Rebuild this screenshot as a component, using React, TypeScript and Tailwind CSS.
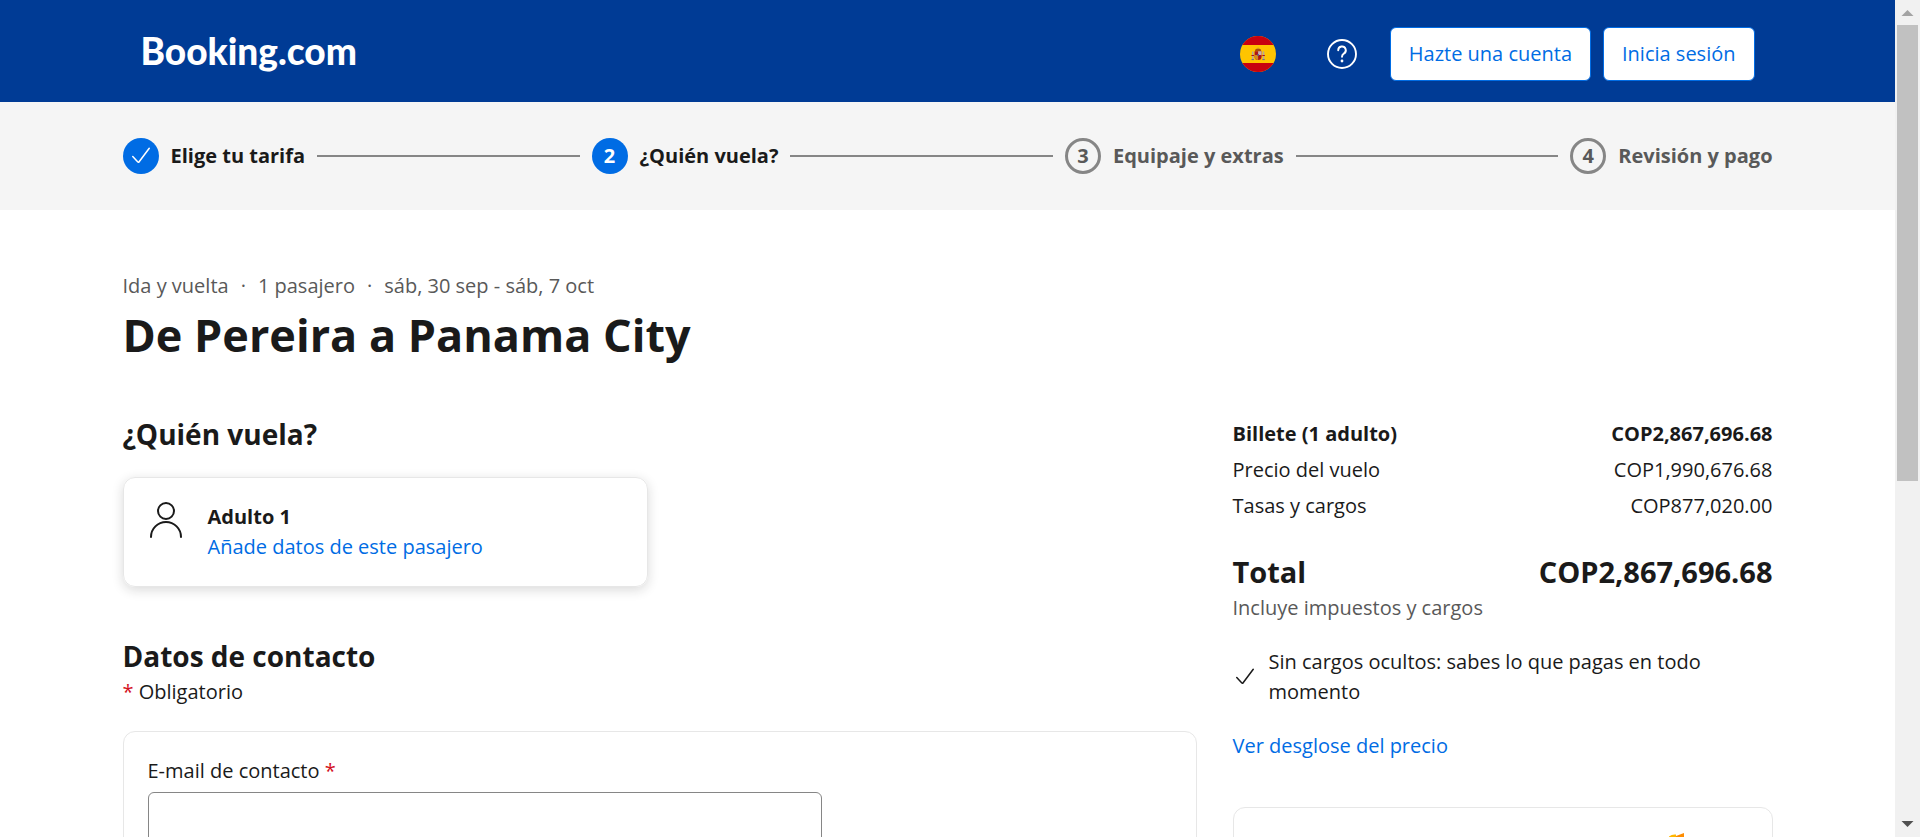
import { Fragment } from "react";

const steps = [
  { label: "Elige tu tarifa", state: "done" },
  { label: "¿Quién vuela?", state: "current" },
  { label: "Equipaje y extras", state: "pending" },
  { label: "Revisión y pago", state: "pending" },
];

const priceRows = [
  { label: "Billete (1 adulto)", value: "COP2,867,696.68", bold: true },
  { label: "Precio del vuelo", value: "COP1,990,676.68", bold: false },
  { label: "Tasas y cargos", value: "COP877,020.00", bold: false },
];

function CheckIcon({ className }: { className: string }) {
  return (
    <svg viewBox="0 0 24 24" className={className} fill="none" stroke="currentColor" strokeWidth="1.5" strokeLinecap="round" strokeLinejoin="round" aria-hidden="true">
      <path d="M3.750 12.500l5.100 5.600a.7.7 0 0 0 1.100-.1L20.250 4.250" />
    </svg>
  );
}

function SpainFlag() {
  return (
    <svg viewBox="0 0 36 36" className="size-9" aria-hidden="true">
      <defs>
        <clipPath id="round">
          <circle cx="18" cy="18" r="18" />
        </clipPath>
      </defs>
      <g clipPath="url(#round)">
        <rect width="36" height="36" fill="#ffc400" />
        <rect width="36" height="9" fill="#c8000f" />
        <rect y="27" width="36" height="9" fill="#c8000f" />
        <rect x="12" y="15.500" width="1.500" height="8" fill="#b5a79b" />
        <rect x="22.800" y="15.500" width="1.500" height="8" fill="#b5a79b" />
        <path d="M11.400 19.500h2.600M22.300 19.500h2.600" stroke="#ad1519" strokeWidth="1" />
        <path d="M11.500 23.600h2.500M22.300 23.600h2.500" stroke="#6a6a8f" strokeWidth="1" />
        <path d="M15 15.200c0-2 1.200-2.700 3.100-2.700s3.100.7 3.100 2.700z" fill="#a8500f" />
        <circle cx="18.100" cy="12.300" r=".8" fill="#c8a02a" />
        <path d="M14.600 15.200h7v5.400a3.500 3.500 0 0 1-7 0z" fill="#ad1519" />
        <path d="M18.100 15.200h3.500v3.800h-3.500z" fill="#c9b3b0" />
        <path d="M14.600 19h3.500v5a3.500 3.500 0 0 1-3.500-3.400z" fill="#d58a1c" />
        <circle cx="18.100" cy="19" r="1" fill="#5a5a8c" />
      </g>
    </svg>
  );
}

function HelpIcon() {
  return (
    <svg viewBox="0 0 30 30" className="size-[30px]" fill="none" stroke="currentColor" strokeWidth="1.900" strokeLinecap="round" aria-hidden="true">
      <circle cx="15" cy="15" r="14" />
      <path d="M11.200 11.300a3.800 3.800 0 1 1 5.600 3.300c-1.200.7-1.800 1.300-1.800 3.100" />
      <circle cx="15" cy="22" r="1.400" fill="currentColor" stroke="none" />
    </svg>
  );
}

function PersonIcon() {
  return (
    <svg viewBox="0 0 36 36" className="size-9 shrink-0" fill="none" stroke="currentColor" strokeWidth="2" strokeLinecap="round" aria-hidden="true">
      <circle cx="18" cy="9" r="8" />
      <path d="M3 35a15 15 0 0 1 30 0" />
    </svg>
  );
}

function Header() {
  return (
    <header className="bg-[#003b95] text-white">
      <div className="mx-auto flex h-[102px] max-w-[1650px] items-center justify-between px-[18px] pt-1.5">
        <a href="#inicio" className="pb-1.5 font-[Lato,sans-serif] text-[37px] leading-10 font-black">Booking.com</a>
        <div className="flex items-center gap-3">
          <button type="button" aria-label="Idioma: español" className="mr-[39px]">
            <SpainFlag />
          </button>
          <a href="#ayuda" aria-label="Ayuda" className="mr-[21px]">
            <HelpIcon />
          </a>
          <button type="button" className="h-[54px] rounded-md border border-[#006ce4] bg-white px-[18px] text-xl font-medium text-[#006ce4]">
            Hazte una cuenta
          </button>
          <button type="button" className="h-[54px] rounded-md border border-[#006ce4] bg-white px-[18px] text-xl font-medium text-[#006ce4]">
            Inicia sesión
          </button>
        </div>
      </div>
    </header>
  );
}

const circleStyle: Record<string, string> = {
  done: "bg-[#006ce4] text-white",
  current: "bg-[#006ce4] text-white",
  pending: "border-3 border-[#868686] text-[#595959]",
};

function Stepper() {
  return (
    <nav aria-label="Progreso" className="bg-[#f5f5f5]">
      <ol className="mx-auto flex h-[108px] max-w-[1650px] items-center gap-3 text-xl font-bold">
        {steps.map((step, i) => (
          <Fragment key={step.label}>
            {i > 0 && <li aria-hidden="true" className="h-0.5 flex-1 bg-[#868686]" />}
            <li className="flex items-center gap-3">
              <span className={`flex size-9 items-center justify-center rounded-full ${circleStyle[step.state]}`}>
                {step.state === "done" ? <CheckIcon className="size-6" /> : i + 1}
              </span>
              <span className={step.state === "pending" ? "text-[#595959]" : "text-[#1a1a1a]"}>{step.label}</span>
            </li>
          </Fragment>
        ))}
      </ol>
    </nav>
  );
}

function PassengerCard() {
  return (
    <section className="mt-[22px] flex w-[525px] max-w-full gap-6 rounded-xl border border-[#e7e7e7] p-6 shadow-[0_3px_12px_rgba(26,26,26,0.16)]">
      <PersonIcon />
      <div className="leading-[30px]">
        <h3 className="font-bold">Adulto 1</h3>
        <a href="#adulto-1" className="text-[#006ce4]">Añade datos de este pasajero</a>
      </div>
    </section>
  );
}

function ContactForm() {
  return (
    <form className="mt-6 rounded-xl border border-[#e7e7e7] p-6">
      <label htmlFor="email" className="block font-medium">
        E-mail de contacto <span className="font-normal text-[#d4111e]">*</span>
      </label>
      <input id="email" type="email" required className="mt-1.5 block h-[54px] w-[674px] max-w-full rounded-md border border-[#868686] bg-white px-3" />
    </form>
  );
}

function PriceSummary() {
  return (
    <aside className="w-[540px] shrink-0 pt-1.5">
      <dl className="flex flex-col gap-1.5">
        {priceRows.map((row) => (
          <div key={row.label} className={`flex justify-between ${row.bold ? "font-bold" : "font-medium"}`}>
            <dt>{row.label}</dt>
            <dd>{row.value}</dd>
          </div>
        ))}
      </dl>
      <div className="mt-[30px] flex justify-between text-[29px] leading-[42px] font-bold">
        <h2>Total</h2>
        <span>COP2,867,696.68</span>
      </div>
      <p className="text-[#595959]">Incluye impuestos y cargos</p>
      <div className="mt-6 flex items-center gap-3">
        <CheckIcon className="size-6 shrink-0" />
        <p>Sin cargos ocultos: sabes lo que pagas en todo momento</p>
      </div>
      <a href="#desglose" className="mt-6 block font-medium text-[#006ce4]">Ver desglose del precio</a>
      <section className="mt-[46px] h-60 rounded-xl border border-[#e7e7e7] px-[85px] pt-[25px]">
        <svg viewBox="0 0 20 30" className="ml-auto h-[30px] w-5" aria-hidden="true">
          <path d="M2 3.500Q5 1 9 1.500V30H0z" fill="#ffb700" />
          <path d="M9 3L17 0v30H9z" fill="#ff8d00" />
        </svg>
      </section>
    </aside>
  );
}

function ScrollBar() {
  return (
    <div aria-hidden="true" className="flex w-[25px] shrink-0 flex-col items-center bg-[#f1f1f1]">
      <svg viewBox="0 0 25 25" className="size-[25px] shrink-0">
        <path d="M6.500 16L12.500 10L18.500 16z" fill="#a3a3a3" />
      </svg>
      <div className="min-h-0 w-[21px] flex-1">
        <div className="h-[58%] bg-[#c1c1c1]" />
      </div>
      <svg viewBox="0 0 25 25" className="size-[25px] shrink-0">
        <path d="M6.500 9L12.500 15L18.500 9z" fill="#505050" />
      </svg>
    </div>
  );
}

export default function App() {
  return (
    <div className="flex h-screen bg-white font-['Open_Sans','Noto_Sans',sans-serif] text-[#1a1a1a]">
      <div className="min-w-0 flex-1 overflow-y-auto [scrollbar-width:none]">
        <Header />
        <Stepper />
        <main className="mx-auto max-w-[1650px] pt-[61px] text-xl leading-[30px]">
          <p className="flex gap-3 text-[#595959]">
            <span>Ida y vuelta</span>
            <span>·</span>
            <span>1 pasajero</span>
            <span>·</span>
            <span>sáb, 30 sep - sáb, 7 oct</span>
          </p>
          <h1 className="mt-1 text-[45px] leading-[60px] font-bold">De Pereira a Panama City</h1>
          <div className="mt-12 flex gap-9">
            <div className="min-w-0 flex-1">
              <h2 className="text-[28px] leading-[42px] font-bold">¿Quién vuela?</h2>
              <PassengerCard />
              <h2 className="mt-12 text-[28px] leading-[42px] font-bold">Datos de contacto</h2>
              <p>
                <span className="text-[#d4111e]">*</span> Obligatorio
              </p>
              <ContactForm />
            </div>
            <PriceSummary />
          </div>
        </main>
      </div>
      <ScrollBar />
    </div>
  );
}
